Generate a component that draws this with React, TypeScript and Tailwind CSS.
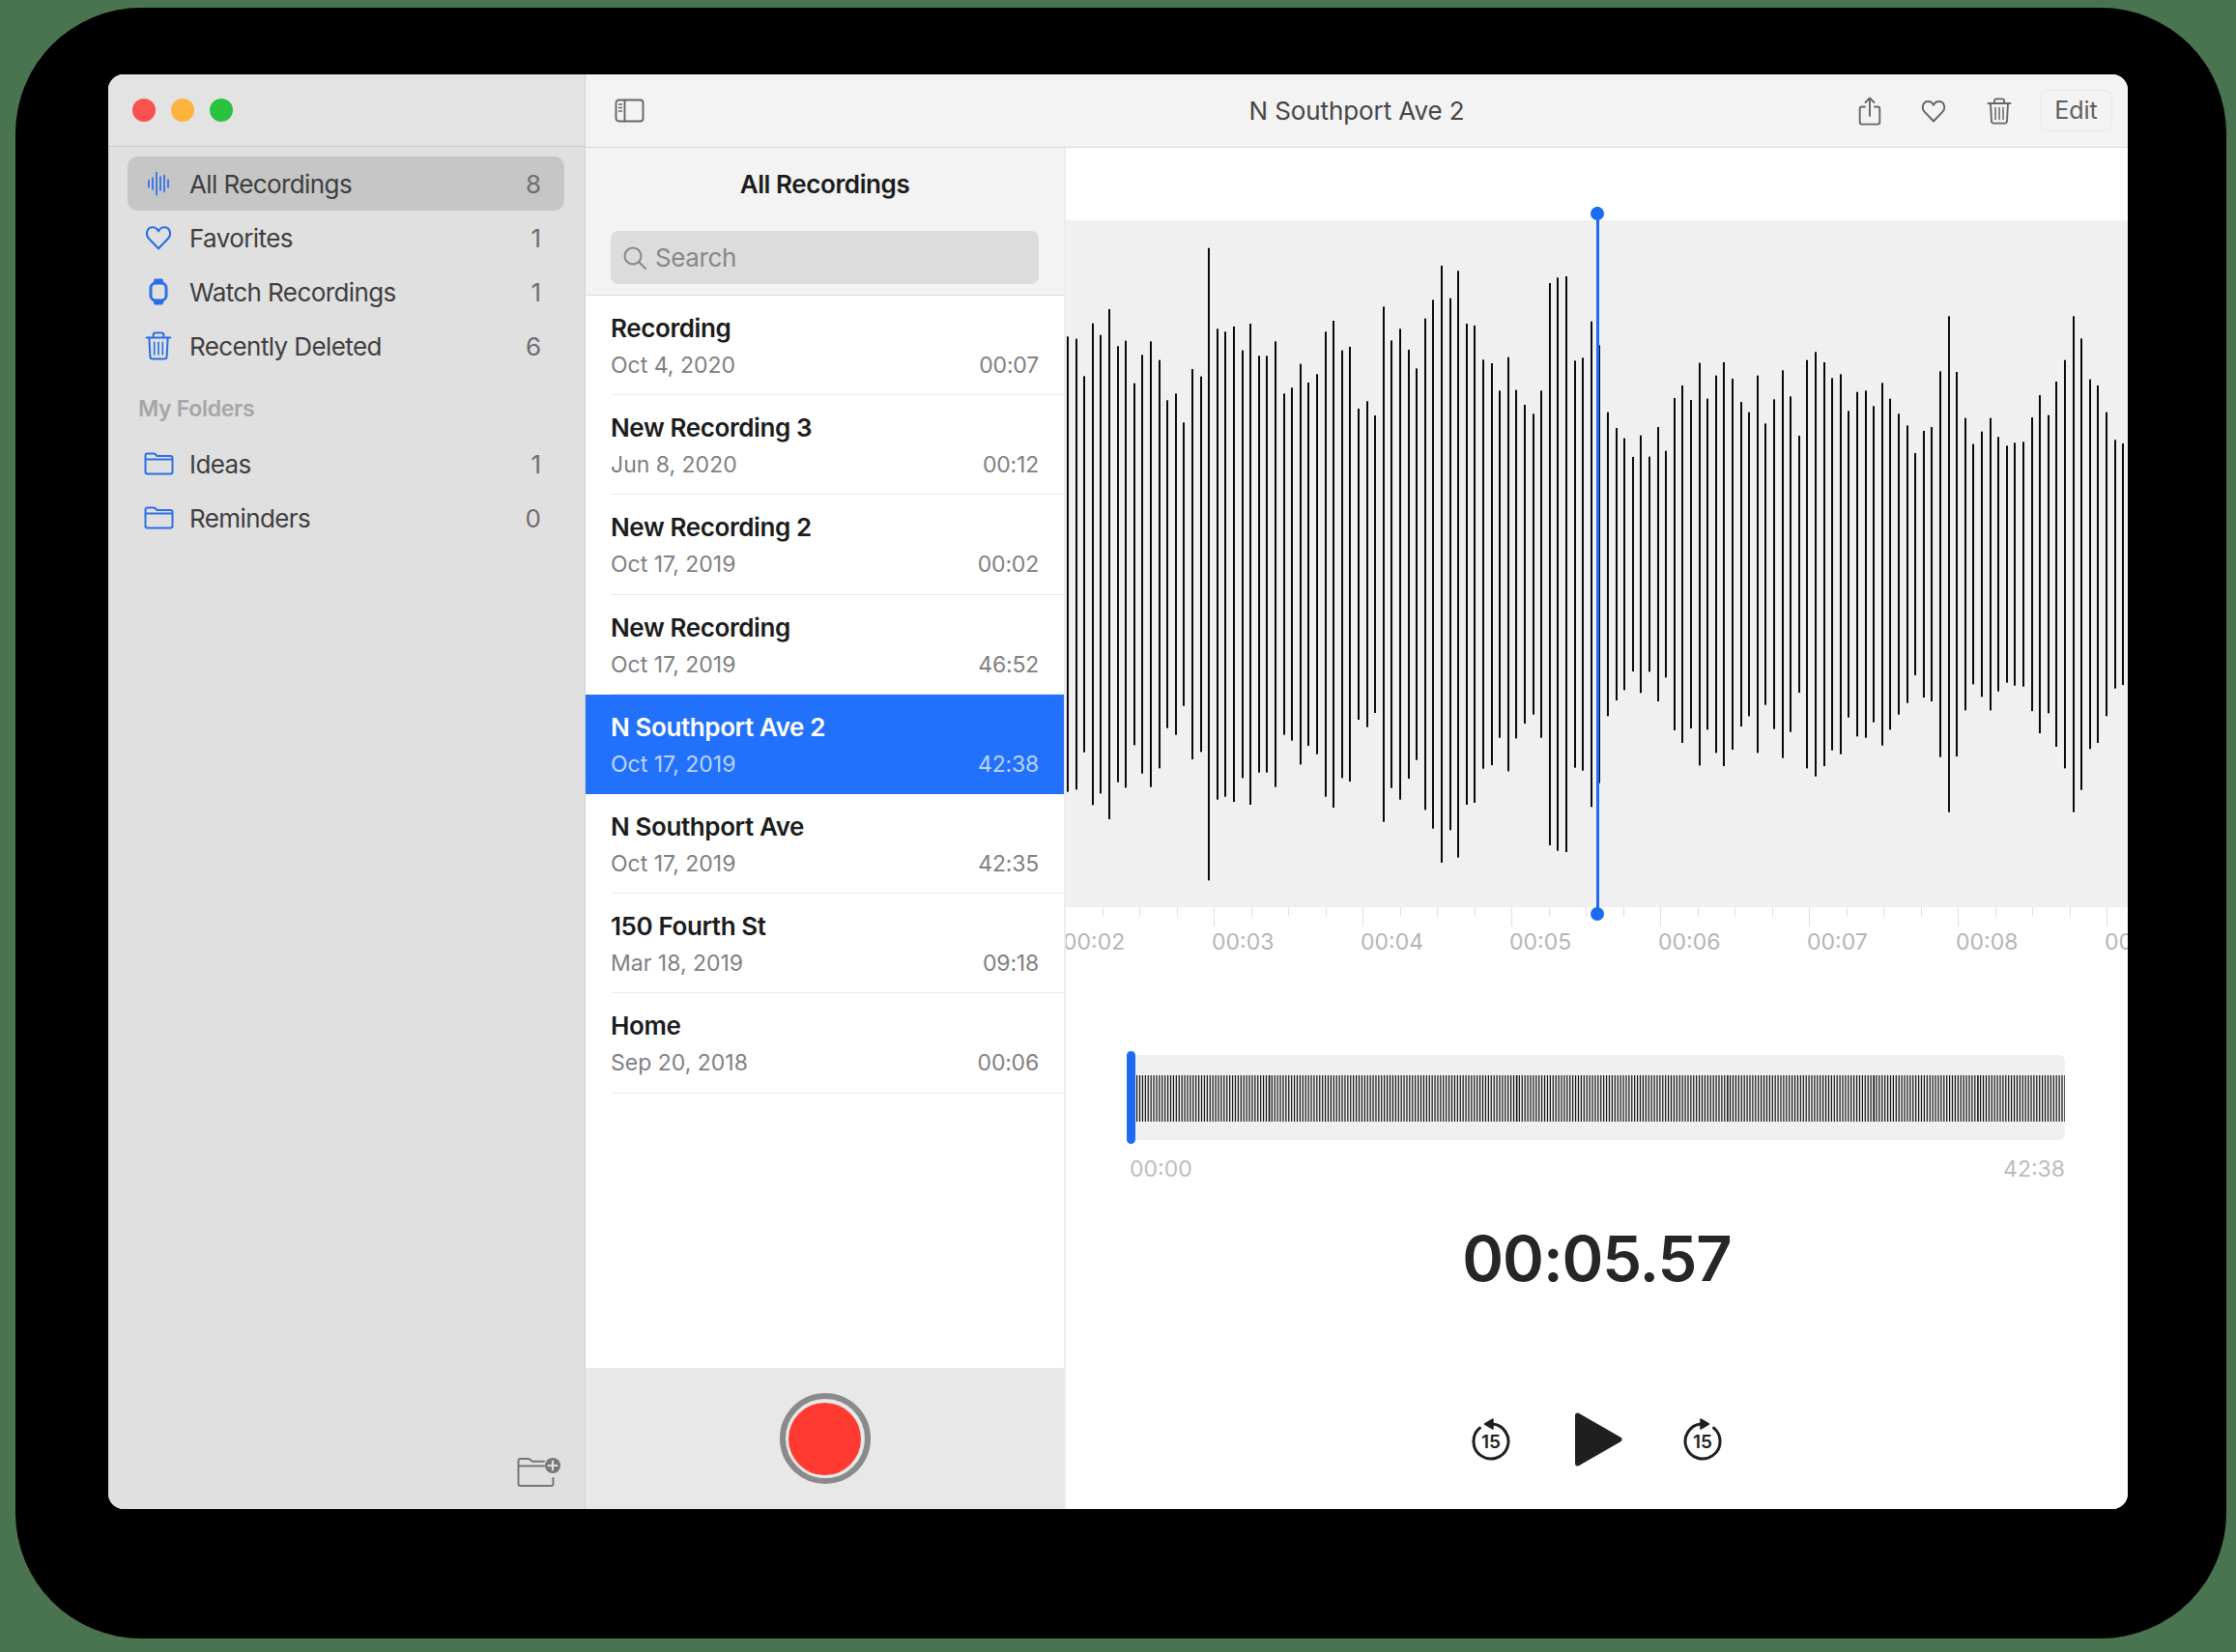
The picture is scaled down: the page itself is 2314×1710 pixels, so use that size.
import React from 'react';

// bar tops read off the recording, converted to half heights around the centre line
const LEFT_TOPS = [445,452,568,404,440,360,475,458,590,502,460,518,643,622,712,546,569,170,421,430,414,488,405,505,505,460,622,604,530,588,562,430,396,488,477,669,646,690,352,457,421,486,544,389,331,225,326,241,405,411,517,528,613,509,611,657,685,613,279,262,258,520,511,398,472,680,729,761,819,752];
const RIGHT_TOPS = [728,636,710,546,507,552,437,548,476,435,486,558,590,476,625,550,460,541,663,428,403,435,484,472,586,527,523,571,499,548,595,631,717,648,636,463,292,465,608,689,650,608,667,694,685,682,606,537,599,495,428,292,361,488,507,590,676,687];
const BARS = [...LEFT_TOPS.map((y) => 384 - y / 3), ...RIGHT_TOPS.map((y) => 354 - y / 3)];

const OVERVIEW = Array.from({ length: 331 }, (_, i) => i);
const OVERVIEW_HEAVY = [47, 135, 210, 262, 299];

const TICK_LABELS = ['00:02', '00:03', '00:04', '00:05', '00:06', '00:07', '00:08', '00:09'];

const recordings = [
  { title: 'Recording', date: 'Oct 4, 2020', length: '00:07' },
  { title: 'New Recording 3', date: 'Jun 8, 2020', length: '00:12' },
  { title: 'New Recording 2', date: 'Oct 17, 2019', length: '00:02' },
  { title: 'New Recording', date: 'Oct 17, 2019', length: '46:52' },
  { title: 'N Southport Ave 2', date: 'Oct 17, 2019', length: '42:38', active: true },
  { title: 'N Southport Ave', date: 'Oct 17, 2019', length: '42:35' },
  { title: '150 Fourth St', date: 'Mar 18, 2019', length: '09:18' },
  { title: 'Home', date: 'Sep 20, 2018', length: '00:06' },
];

type IconProps = { className?: string };

const WaveIcon = ({ className }: IconProps) => (
  <svg className={className} width="24" height="26" viewBox="0 0 24 26" fill="none" stroke="currentColor" strokeWidth="1.7" strokeLinecap="round">
    <path d="M2 9.5v7M6 7v12M10 1.5v23M14 6v14M18 4.5v17M22 9v8" />
  </svg>
);

const HeartIcon = ({ className }: IconProps) => (
  <svg className={className} width="26" height="24" viewBox="0 0 26 24" fill="none" stroke="currentColor" strokeWidth="2" strokeLinejoin="round">
    <path d="M13 22.5 3.6 12.6C.2 9 1.9 2 7.3 2c2.7 0 4.7 1.5 5.7 3.8C14 3.5 16 2 18.7 2c5.4 0 7.1 7 3.7 10.6Z" />
  </svg>
);

const WatchIcon = ({ className }: IconProps) => (
  <svg className={className} width="20" height="28" viewBox="0 0 20 28" fill="none">
    <path d="M5 5 6 1h8l1 4ZM5 23l1 4h8l1-4Z" fill="currentColor" stroke="currentColor" strokeWidth="1" strokeLinejoin="round" />
    <rect x="2" y="5" width="16" height="18" rx="5" stroke="currentColor" strokeWidth="3" />
  </svg>
);

const TrashIcon = ({ className }: IconProps) => (
  <svg className={className} width="26" height="28" viewBox="0 0 26 28" fill="none" stroke="currentColor" strokeWidth="1.9" strokeLinecap="round" strokeLinejoin="round">
    <path d="M1.5 6h23M8 5.5V3.2C8 2 8.8 1.4 10 1.4h6c1.2 0 2 .6 2 1.8V5.5" />
    <path d="M4 6l1 18.5c.1 1.3 1 2.1 2.3 2.1h11.4c1.3 0 2.2-.8 2.3-2.1L22 6" />
    <path d="M9 10.5v12M13 10.5v12M17 10.5v12" strokeWidth="1.5" />
  </svg>
);

const FolderIcon = ({ className }: IconProps) => (
  <svg className={className} width="31" height="24" viewBox="0 0 31 24" fill="none" stroke="currentColor" strokeWidth="2" strokeLinejoin="round">
    <path d="M1.5 5V3.5C1.5 2.2 2.4 1.5 3.5 1.5h6.3c1 0 1.5.3 2.2 1L13.5 4h14c1.2 0 2 .9 2 2v14.5c0 1.2-.9 2-2 2h-24c-1.2 0-2-.9-2-2Z" />
    <path d="M1.5 7.5h28" />
  </svg>
);

const FolderPlusIcon = ({ className }: IconProps) => (
  <svg className={className} width="46" height="32" viewBox="0 0 46 32" fill="none">
    <path d="M1.5 8V4c0-1.3.8-2 2-2h8c1 0 1.5.3 2.3 1l2 1.8H28M1.5 9.5h27M1.5 8v20c0 1.2.8 2 2 2h32c1.2 0 2-.8 2-2v-6" stroke="currentColor" strokeWidth="2" strokeLinejoin="round" strokeLinecap="round" />
    <circle cx="37" cy="9" r="8" fill="currentColor" />
    <path d="M37 4.5v9M32.5 9h9" stroke="#e0e0e0" strokeWidth="2.2" strokeLinecap="round" />
  </svg>
);

const ShareIcon = ({ className }: IconProps) => (
  <svg className={className} width="24" height="30" viewBox="0 0 24 30" fill="none" stroke="currentColor" strokeWidth="1.9" strokeLinecap="round" strokeLinejoin="round">
    <path d="M7 10.5H4c-1.5 0-2.3.8-2.3 2.3v13.5c0 1.5.8 2.3 2.3 2.3h16c1.5 0 2.3-.8 2.3-2.3V12.8c0-1.5-.8-2.3-2.3-2.3h-3" />
    <path d="M12 20V2M7.5 6 12 1.5 16.5 6" />
  </svg>
);

const SidebarToggleIcon = ({ className }: IconProps) => (
  <svg className={className} width="31" height="25" viewBox="0 0 31 25" fill="none" stroke="currentColor" strokeLinecap="round">
    <rect x="1.5" y="1.5" width="28" height="22" rx="3" strokeWidth="1.9" />
    <path d="M10.5 1.5v22" strokeWidth="1.9" />
    <path d="M4.5 6h3M4.5 9.5h3M4.5 13h3" strokeWidth="1.5" />
  </svg>
);

const SkipIcon = ({ back }: { back?: boolean }) => (
  <svg width="42" height="48" viewBox="0 0 42 48" fill="none">
    <g transform={back ? 'translate(42 0) scale(-1 1)' : undefined}>
      <path d="M32.6 12.2A18 18 0 1 1 19 8.1" stroke="#1f1f1f" strokeWidth="3" strokeLinecap="round" />
      <path d="M19 3 27.5 8 19 13Z" fill="#1f1f1f" stroke="#1f1f1f" strokeWidth="1.5" strokeLinejoin="round" />
    </g>
    <text x="21" y="33" textAnchor="middle" fontSize="19" fontWeight="600" fill="#1f1f1f" fontFamily="Inter, sans-serif">15</text>
  </svg>
);

const PlayIcon = ({ className }: IconProps) => (
  <svg className={className} width="50" height="58" viewBox="0 0 50 58" fill="#1f1f1f" stroke="#1f1f1f" strokeWidth="5" strokeLinejoin="round">
    <path d="M3.5 4 47 29 3.5 54Z" />
  </svg>
);

const SidebarRow = ({ icon, label, count, active }: { icon: React.ReactNode; label: string; count: number; active?: boolean }) => (
  <div className={`flex h-[56px] items-center rounded-[10px] pr-[24px] ${active ? 'bg-[#c6c6c6]' : ''}`}>
    <div className="flex w-[64px] shrink-0 items-center justify-center text-[#2b6ee6]">{icon}</div>
    <span className="flex-1 text-[26px] tracking-[-0.6px] text-[#3e3e3e]">{label}</span>
    <span className="text-[26px] text-[#6e6e6e]">{count}</span>
  </div>
);

const Sidebar = () => (
  <aside className="flex w-[494px] shrink-0 flex-col border-r border-[#d2d2d2] bg-[#e0e0e0]">
    <div className="flex h-[75px] shrink-0 items-center gap-[16px] border-b border-[#c9c9c9] bg-[#e3e3e3] pl-[25px]">
      <div className="h-[24px] w-[24px] rounded-full bg-[#fb5050]" />
      <div className="h-[24px] w-[24px] rounded-full bg-[#fdb33c]" />
      <div className="h-[24px] w-[24px] rounded-full bg-[#2ac340]" />
    </div>
    <div className="flex flex-1 flex-col pl-[20px] pr-[21px] pt-[10px]">
      <SidebarRow active icon={<WaveIcon />} label="All Recordings" count={8} />
      <SidebarRow icon={<HeartIcon className="h-[26px] w-[28px]" />} label="Favorites" count={1} />
      <SidebarRow icon={<WatchIcon />} label="Watch Recordings" count={1} />
      <SidebarRow icon={<TrashIcon className="h-[30px] w-[28px]" />} label="Recently Deleted" count={6} />
      <div className="flex h-[66px] items-center pl-[11px] pt-[9px] text-[23px] font-semibold tracking-[-0.3px] text-[#a6a6a6]">My Folders</div>
      <SidebarRow icon={<FolderIcon />} label="Ideas" count={1} />
      <SidebarRow icon={<FolderIcon />} label="Reminders" count={0} />
    </div>
    <div className="flex justify-end pb-[22px] pr-[24px] text-[#777777]">
      <FolderPlusIcon />
    </div>
  </aside>
);

const RecordingList = () => (
  <section className="flex w-[497px] shrink-0 flex-col border-r-2 border-[#ececec] bg-white">
    <div className="h-[153px] shrink-0 border-b border-[#d9d9d9] bg-[#f3f3f3] px-[26px] pt-[22px]">
      <h2 className="text-center text-[26px] font-semibold leading-[32px] tracking-[-0.4px] text-[#1c1c1c]">All Recordings</h2>
      <div className="mt-[32px] flex h-[55px] w-[443px] items-center gap-[8px] rounded-[8px] bg-[#dcdcdc] pl-[12px] text-[#878787]">
        <svg width="26" height="26" viewBox="0 0 26 26" fill="none" stroke="currentColor" strokeWidth="2" strokeLinecap="round">
          <circle cx="11" cy="11" r="8.5" />
          <path d="m17.5 17.5 6.5 6.5" />
        </svg>
        <span className="text-[26px] tracking-[-0.4px]">Search</span>
      </div>
    </div>
    <div className="flex-1">
      {recordings.map((r) => (
        <div key={r.title} className={`h-[103.2px] pl-[26px] ${r.active ? 'bg-[#2271fb]' : ''}`}>
          <div className={`flex h-full flex-col pr-[26px] pt-[18px] ${r.active ? '' : 'border-b border-[#eaeaea]'}`}>
            <div className={`text-[26px] font-semibold leading-[32px] tracking-[-0.4px] ${r.active ? 'text-white' : 'text-[#1c1c1c]'}`}>{r.title}</div>
            <div className={`mt-[6px] flex justify-between text-[23px] leading-[32px] ${r.active ? 'text-[#bcd4ff]' : 'text-[#808080]'}`}>
              <span>{r.date}</span>
              <span className="tracking-[-0.2px]">{r.length}</span>
            </div>
          </div>
        </div>
      ))}
    </div>
    <div className="flex h-[146px] shrink-0 items-center justify-center bg-[#e8e8e8]">
      <div className="flex h-[94px] w-[94px] items-center justify-center rounded-full border-[6px] border-[#8a8a8a]">
        <div className="h-[75px] w-[75px] rounded-full bg-[#ff3a30]" />
      </div>
    </div>
  </section>
);

const Ruler = () => (
  <div className="h-[64px] overflow-hidden">
    <div className="-ml-[1px] flex">
      {TICK_LABELS.map((label) => (
        <div key={label} className="w-[154px] shrink-0">
          <div className="flex">
            <div className="h-[20px] w-[38.5px] border-l border-[#e0e0e0]" />
            <div className="h-[10px] w-[38.5px] border-l border-[#e0e0e0]" />
            <div className="h-[10px] w-[38.5px] border-l border-[#e0e0e0]" />
            <div className="h-[10px] w-[38.5px] border-l border-[#e0e0e0]" />
          </div>
          <div className="-ml-[2px] mt-[2px] text-[23px] leading-[28px] text-[#b5b5b5]">{label}</div>
        </div>
      ))}
    </div>
  </div>
);

const Player = () => (
  <section className="flex min-w-0 flex-1 flex-col bg-white">
    <div className="relative">
      <div className="h-[75px]" />
      <div className="h-[711px] bg-[#f0f0f0]">
        <svg width="1099" height="711" viewBox="0 0 1099 711">
          {BARS.map((h, i) => (
            <rect key={i} x={Math.round(1 + i * 8.6)} y={356 - h} width="2" height={h * 2} fill="#0a0a0a" />
          ))}
        </svg>
      </div>
      <div className="absolute bottom-[-7px] left-[549px] top-[61px] w-[3px] bg-[#1d6bf0]" />
      <div className="absolute left-[543px] top-[61px] h-[14px] w-[14px] rounded-full bg-[#1d6bf0]" />
      <div className="absolute bottom-[-14px] left-[543px] h-[14px] w-[14px] rounded-full bg-[#1d6bf0]" />
    </div>
    <Ruler />
    <div className="pl-[67px] pr-[65px] pt-[89px]">
      <div className="relative h-[88px] rounded-r-[6px] bg-[#f0f0f0]">
        <svg className="block" width="967" height="88" viewBox="0 0 967 88">
          {OVERVIEW.map((i) => (
            <rect key={i} x={6 + i * 2.91} y="21" width={OVERVIEW_HEAVY.includes(i) ? 1.6 : 1.2} height="48" fill="#111111" />
          ))}
        </svg>
        <div className="absolute -left-[4px] -top-[4px] h-[96px] w-[9px] rounded-full bg-[#1d6bf0]" />
      </div>
      <div className="mt-[16px] flex justify-between text-[23px] leading-[28px] text-[#bcbcbc]">
        <span className="-ml-[1px]">00:00</span>
        <span>42:38</span>
      </div>
    </div>
    <div className="mt-[39px] text-center text-[65px] font-[560] leading-[80px] tracking-[-1.1px] text-[#262626]">00:05.57</div>
    <div className="mt-[118px] flex items-center justify-center">
      <SkipIcon back />
      <PlayIcon className="ml-[65px] mr-[62px]" />
      <SkipIcon />
    </div>
  </section>
);

const Toolbar = () => (
  <header className="grid h-[76px] shrink-0 grid-cols-[1fr_auto_1fr] items-center border-b border-[#d9d9d9] bg-[#f3f3f3] text-[#666666]">
    <div className="pl-[30px]">
      <SidebarToggleIcon />
    </div>
    <div className="text-[26px] tracking-[-0.1px] text-[#464646]">N Southport Ave 2</div>
    <div className="flex items-center justify-end pr-[16px]">
      <ShareIcon />
      <HeartIcon className="ml-[41px]" />
      <TrashIcon className="ml-[42px]" />
      <div className="ml-[29px] flex h-[43px] w-[75px] items-center justify-center rounded-[9px] border border-[#e6e6e6] text-[25px] text-[#5f5f5f]">Edit</div>
    </div>
  </header>
);

export default function App() {
  return (
    <div className="h-[1710px] w-[2314px] bg-[#4a7350] pb-[14px] pl-[16px] pr-[10px] pt-[8px] font-[Inter,sans-serif]">
      <div className="h-[1688px] rounded-[130px] bg-black pl-[96px] pr-[102px] pt-[69px]">
        <div className="flex h-[1485px] overflow-hidden rounded-[16px] bg-white">
          <Sidebar />
          <div className="flex min-w-0 flex-1 flex-col">
            <Toolbar />
            <div className="flex min-h-0 flex-1">
              <RecordingList />
              <Player />
            </div>
          </div>
        </div>
      </div>
    </div>
  );
}
